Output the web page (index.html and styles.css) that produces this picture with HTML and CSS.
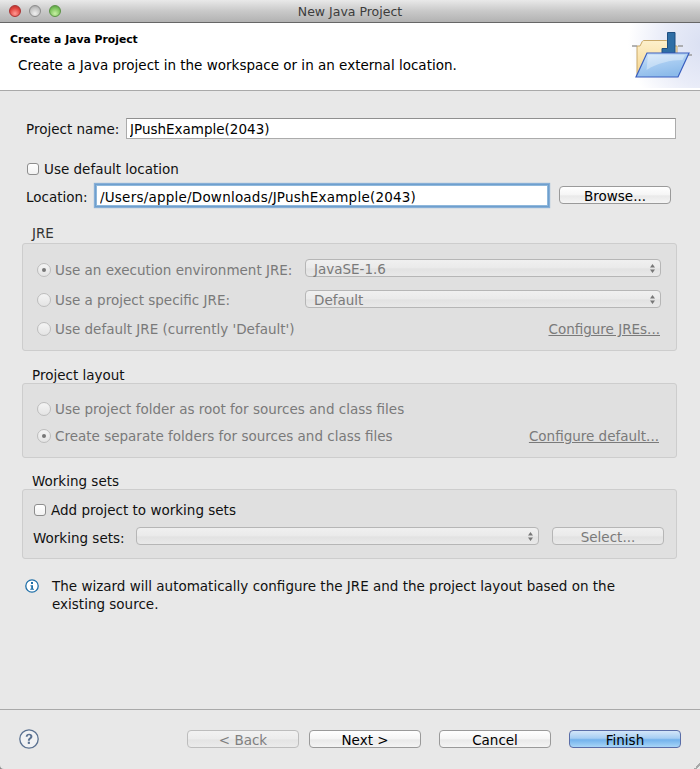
FILE: index.html
```html
<!DOCTYPE html>
<html lang="en">

<head>
    <meta charset="UTF-8">
    <meta name="viewport" content="width=device-width, initial-scale=1.0">
    <title>New Java Project</title>
    <link rel="stylesheet" href="styles.css">
</head>

<body>
    <div class="window">
        <div class="titlebar">
            <div class="lights">
                <span class="light red"></span>
                <span class="light grey"></span>
                <span class="light green"></span>
            </div>
            <span class="title">New Java Project</span>
        </div>

        <div class="header">
            <div class="header-text">
                <h1 class="header-title">Create a Java Project</h1>
                <p class="header-sub">Create a Java project in the workspace or in an external location.</p>
            </div>
            <svg class="header-icon" width="72" height="67" viewBox="628 23 72 67">
                <defs>
                    <radialGradient id="glow" gradientUnits="userSpaceOnUse" cx="706" cy="44" r="78">
                        <stop offset="0" stop-color="#d9dff2" />
                        <stop offset="0.55" stop-color="#e9ecf8" />
                        <stop offset="1" stop-color="#ffffff" />
                    </radialGradient>
                    <linearGradient id="tan" x1="0" y1="0" x2="0" y2="1">
                        <stop offset="0" stop-color="#fdf0cc" />
                        <stop offset="1" stop-color="#f6d48c" />
                    </linearGradient>
                    <linearGradient id="front" x1="0" y1="0" x2="0.4" y2="1">
                        <stop offset="0" stop-color="#d3e6f9" />
                        <stop offset="0.5" stop-color="#a9cdf2" />
                        <stop offset="1" stop-color="#8dbbea" />
                    </linearGradient>
                </defs>
                <rect x="628" y="23" width="72" height="65" fill="url(#glow)" />
                <path d="M637 77V46h3l2-4c.5-1 1-1.500 2-1.500h22c1 0 1.500.5 2 1.500l2 4h7v10" fill="url(#tan)" stroke="#c9a868" />
                <path d="M632 46h5M678 46h5M688 55h4" stroke="#9a9a9a" stroke-width="1.500" fill="none" />
                <path d="M667.500 32.500h7.500V53h-13v-4.500h5.500z" fill="#2f6ea5" stroke="#1f4f80" />
                <path d="M647 53h42l-11 24h-42z" fill="url(#front)" stroke="#3a5fc0" stroke-width="1.200" />
                <path d="M648 55h37l-2.500 5c-12 0-25 3-36 10z" fill="#ffffff" opacity="0.35" />
            </svg>
        </div>

        <div class="content">
            <div class="field-row project-row">
                <label class="name-label">Project name:</label>
                <input class="text-input project-input" type="text" value="JPushExample(2043)">
            </div>

            <div class="check-row default-row">
                <span class="checkbox"></span>
                <span>Use default location</span>
            </div>

            <div class="field-row location-row">
                <label class="location-label">Location:</label>
                <input class="text-input location-input" type="text" value="/Users/apple/Downloads/JPushExample(2043)">
                <button class="btn browse-btn" type="button">Browse...</button>
            </div>

            <div class="group-label disabled-label">JRE</div>
            <div class="group jre-group">
                <div class="row">
                    <span class="radio on"></span>
                    <span class="muted option-text">Use an execution environment JRE:</span>
                    <div class="select jre-select">
                        <span class="muted">JavaSE-1.6</span>
                        <svg class="updown" width="5" height="9" viewBox="0 0 5 9"><path d="M2.500 0L5 3.500H0zM2.500 9L0 5.500h5z" /></svg>
                    </div>
                </div>
                <div class="row row-two">
                    <span class="radio"></span>
                    <span class="muted option-text">Use a project specific JRE:</span>
                    <div class="select jre-select select-low">
                        <span class="muted">Default</span>
                        <svg class="updown" width="5" height="9" viewBox="0 0 5 9"><path d="M2.500 0L5 3.500H0zM2.500 9L0 5.500h5z" /></svg>
                    </div>
                </div>
                <div class="row row-three">
                    <span class="radio"></span>
                    <span class="muted">Use default JRE (currently 'Default')</span>
                    <a class="link">Configure JREs...</a>
                </div>
            </div>

            <div class="group-label">Project layout</div>
            <div class="group layout-group">
                <div class="row">
                    <span class="radio"></span>
                    <span class="muted">Use project folder as root for sources and class files</span>
                </div>
                <div class="row row-layout">
                    <span class="radio on"></span>
                    <span class="muted">Create separate folders for sources and class files</span>
                    <a class="link">Configure default...</a>
                </div>
            </div>

            <div class="group-label sets-heading">Working sets</div>
            <div class="group sets-group">
                <div class="row check-row">
                    <span class="checkbox"></span>
                    <span>Add project to working sets</span>
                </div>
                <div class="row row-sets">
                    <label class="sets-label">Working sets:</label>
                    <div class="select sets-select">
                        <svg class="updown" width="5" height="9" viewBox="0 0 5 9"><path d="M2.500 0L5 3.500H0zM2.500 9L0 5.500h5z" /></svg>
                    </div>
                    <button class="btn select-btn" type="button">Select...</button>
                </div>
            </div>

            <div class="info">
                <svg class="info-icon" width="14" height="14" viewBox="0 0 14 14">
                    <circle cx="7" cy="7" r="6.200" fill="#ffffff" stroke="#1f6fa8" stroke-width="1.300" />
                    <path d="M6 3h2v2H6zM5.500 6.200H8v3.600h1v1H5.200v-1h1V7.200h-.7z" fill="#1f6fa8" />
                </svg>
                <p class="info-text">The wizard will automatically configure the JRE and the project layout based on the existing source.</p>
            </div>
        </div>

        <div class="footer">
            <svg class="help" width="20" height="20" viewBox="0 0 20 20">
                <circle cx="10" cy="10" r="9.200" fill="#f1f2f4" stroke="#5a7191" stroke-width="1.300" />
                <path d="M6.700 7.800C6.800 5.800 8.200 4.800 10.100 4.800c2 0 3.300 1.100 3.300 2.700 0 2.400-2.600 2.400-2.600 4.300H8.900c0-2.800 2.400-2.900 2.400-4.300 0-.7-.5-1.200-1.300-1.200-.9 0-1.300.6-1.400 1.500z" fill="#5a7191" />
                <rect x="8.800" y="12.700" width="2.100" height="2.200" fill="#5a7191" />
            </svg>
            <div class="footer-buttons">
                <button class="btn footer-btn back-btn" type="button">&lt; Back</button>
                <button class="btn footer-btn" type="button">Next &gt;</button>
                <button class="btn footer-btn cancel-btn" type="button">Cancel</button>
                <button class="btn footer-btn finish-btn" type="button">Finish</button>
            </div>
        </div>
        <span class="grip"></span>
    </div>
</body>

</html>
```

FILE: styles.css
```css
html,
body {
    margin: 0;
    padding: 0;
    background-color: #8a8a8a;
}

body {
    font-family: "DejaVu Sans", sans-serif;
    font-size: 13.5px;
    color: #111;
}

.window {
    width: 700px;
    height: 769px;
    display: flex;
    flex-direction: column;
    position: relative;
    background-color: #e8e8e8;
    border-bottom-left-radius: 4px;
    overflow: hidden;
}

.grip {
    position: absolute;
    right: 0;
    bottom: 0;
    width: 6px;
    height: 6px;
    background: linear-gradient(135deg, transparent 50%, #a8a8a8 50%, #a8a8a8 68%, transparent 68%);
}

.titlebar {
    height: 22px;
    flex: none;
    display: flex;
    align-items: center;
    justify-content: center;
    position: relative;
    background: linear-gradient(#e9e9e9, #c9c9c9 50%, #b2b2b2);
    border-bottom: 1px solid #666;
}

.lights {
    position: absolute;
    left: 9px;
    top: 5px;
    display: flex;
    gap: 8px;
}

.light {
    width: 12px;
    height: 12px;
    border-radius: 50%;
    box-sizing: border-box;
    border: 1px solid #777;
}

.red {
    background: radial-gradient(circle at 50% 75%, #ff9a94, #e0443e 60%, #a8322e);
    border-color: #a33;
}

.grey {
    background: radial-gradient(circle at 50% 75%, #f0f0f0, #c4c4c4 60%, #999);
    border-color: #8c8c8c;
}

.green {
    background: radial-gradient(circle at 50% 75%, #c8f0a4, #7cc35c 60%, #4f8f3c);
    border-color: #5b9345;
}

.title {
    font-size: 12.5px;
    color: #3c3c3c;
}

.header {
    height: 67px;
    flex: none;
    display: flex;
    justify-content: space-between;
    background-color: #fff;
    border-bottom: 1px solid #a9a9a9;
}

.header-title {
    margin: 9px 0 0 10px;
    font-size: 10.8px;
    line-height: 16px;
    font-weight: bold;
    color: #000;
}

.header-sub {
    margin: 9px 0 0 18px;
    line-height: 16px;
    color: #000;
}

.header-icon {
    flex: none;
    display: block;
}

.content {
    flex: 1;
    padding: 0 23px 0 22px;
}

.field-row {
    display: flex;
    align-items: center;
}

.project-row {
    margin: 27px 0 0 4px;
    height: 21px;
}

.name-label {
    width: 100px;
    flex: none;
}

.text-input {
    box-sizing: border-box;
    font-family: inherit;
    font-size: 13.5px;
    color: #000;
    background-color: #fff;
    outline: none;
    margin: 0;
}

.project-input {
    width: 550px;
    height: 21px;
    padding: 1px 3px 0;
    border: 1px solid #ababab;
    border-top-color: #8f8f8f;
}

.check-row {
    display: flex;
    align-items: center;
    gap: 5px;
}

.default-row {
    margin: 21px 0 0 5px;
    height: 18px;
}

.checkbox {
    width: 10px;
    height: 10px;
    flex: none;
    border: 1px solid #8e8e8e;
    border-radius: 3px;
    background: linear-gradient(#fff, #f2f2f2);
}

.location-row {
    margin: 6px 0 0 4px;
    height: 23px;
}

.location-label {
    width: 69px;
    flex: none;
    padding-top: 2px;
}

.location-input {
    width: 454px;
    height: 23px;
    padding: 2px 4px 0;
    letter-spacing: 0.22px;
    border: 1px solid #6f9fcd;
    box-shadow: 0 0 0 1px #8fb8dc inset, 0 0 1px 1px rgba(110, 160, 210, 0.8);
}

.btn {
    box-sizing: border-box;
    width: 112px;
    font-family: inherit;
    font-size: 13.5px;
    color: #000;
    padding: 2px 0 0;
    margin: 0;
    border: 1px solid #9a9a9a;
    border-radius: 4px;
    background: linear-gradient(#fff, #f5f5f5 50%, #e9e9e9 55%, #f4f4f4);
}

.browse-btn {
    height: 18px;
    line-height: 14px;
    margin-left: 10px;
    margin-top: -1px;
}

.group-label {
    margin: 16px 0 0 10px;
    height: 16px;
    line-height: 16px;
}

.disabled-label {
    margin-top: 18px;
    color: #333;
}

.sets-heading {
    margin-top: 15px;
}

.group {
    box-sizing: border-box;
    border: 1px solid #cdcdcd;
    border-radius: 3px;
    background-color: #e0e0e0;
}

.row {
    height: 20px;
    display: flex;
    align-items: center;
    position: relative;
}

.jre-group {
    margin-top: 2px;
    height: 108px;
    padding: 16px 15px 0 14px;
}

.row-two {
    margin-top: 10px;
}

.row-three {
    margin-top: 9px;
}

.radio {
    width: 14px;
    height: 14px;
    flex: none;
    box-sizing: border-box;
    border: 1px solid #bdbdbd;
    border-radius: 50%;
    margin-right: 4px;
    background: linear-gradient(#f4f4f4, #e4e4e4);
    display: flex;
    align-items: center;
    justify-content: center;
}

.radio.on::after {
    content: "";
    width: 4px;
    height: 4px;
    border-radius: 50%;
    background-color: #777;
}

.muted {
    color: #7a7a7a;
}

.option-text {
    width: 250px;
    flex: none;
}

.select {
    box-sizing: border-box;
    height: 18px;
    display: flex;
    align-items: center;
    justify-content: space-between;
    align-self: flex-start;
    margin-top: -1px;
    padding: 2px 8px 0;
    border: 1px solid #b6b6b6;
    border-radius: 4px;
    background: linear-gradient(#f0f0f0, #eaeaea 50%, #e2e2e2 55%, #e9e9e9);
}

.jre-select {
    width: 357px;
}

.select-low {
    margin-top: 0;
}

.updown {
    fill: #777;
    flex: none;
    margin-left: auto;
    margin-right: -3px;
    margin-top: -2px;
}

.link {
    margin-left: auto;
    margin-right: 1px;
    color: #7a7a7a;
    text-decoration: underline;
}

.layout-group {
    height: 75px;
    padding: 15px 16px 0 14px;
}

.row-layout {
    margin-top: 7px;
}

.sets-group {
    height: 70px;
    padding: 10px 12px 0 11px;
}

.row-sets {
    margin: 8px 0 0 -1px;
}

.sets-label {
    width: 103px;
    flex: none;
}

.sets-select {
    width: 403px;
}

.select-btn {
    height: 18px;
    line-height: 14px;
    margin-left: auto;
    margin-top: -1px;
    align-self: flex-start;
    color: #7a7a7a;
    border-color: #b6b6b6;
    background: linear-gradient(#f0f0f0, #eaeaea 50%, #e2e2e2 55%, #e9e9e9);
}

.info {
    margin: 18px 0 0 3px;
    display: flex;
    align-items: flex-start;
}

.info-icon {
    flex: none;
    margin-top: 2px;
}

.info-text {
    margin: 0 0 0 13px;
    width: 590px;
    line-height: 18px;
}

.footer {
    height: 60px;
    flex: none;
    box-sizing: border-box;
    border-top: 1px solid #a9a9a9;
    display: flex;
    padding: 19px 19px 0;
    justify-content: space-between;
}

.help {
    flex: none;
}

.footer-buttons {
    display: flex;
    gap: 10px;
    padding-top: 1px;
}

.footer-btn {
    height: 18px;
    line-height: 14px;
}

.cancel-btn,
.finish-btn {
    margin-left: 8px;
}

.back-btn {
    color: #7f7f7f;
    border-color: #bdbdbd;
    background: linear-gradient(#f2f2f2, #ececec 50%, #e4e4e4 55%, #ebebeb);
}

.finish-btn {
    border-color: #5a6ea8;
    background: linear-gradient(#d3e6f9, #a6cef3 45%, #72b2ec 55%, #a7d5f7);
}
```
